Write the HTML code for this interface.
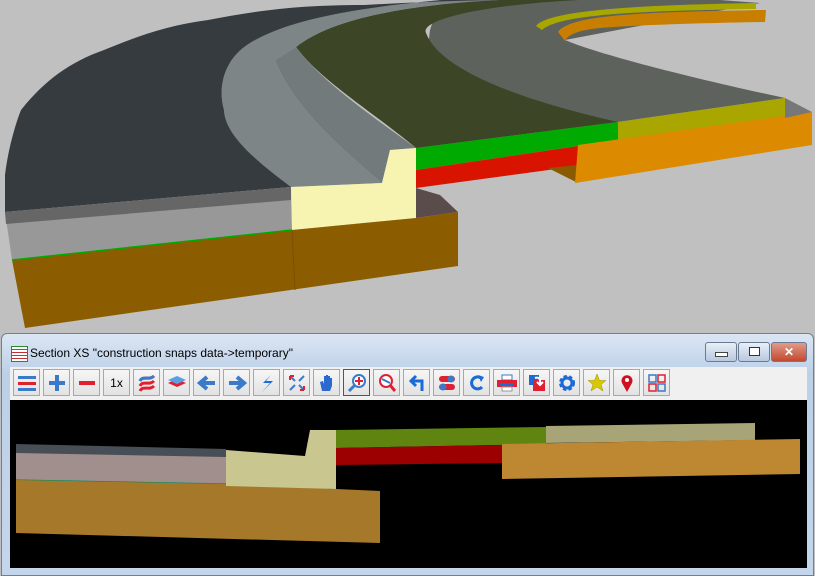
<!DOCTYPE html>
<html><head><meta charset="utf-8"><style>
body{margin:0;width:815px;height:576px;overflow:hidden;background:#c0c0c0;font-family:"Liberation Sans",sans-serif;position:relative}
.win{position:absolute;left:1px;top:333px;width:811px;height:241px;background:linear-gradient(#dbe6f3,#bcd0e8 40px,#c4d6ec);border:1px solid #6f7f94;border-radius:6px 6px 0 0}
.title{position:absolute;left:28px;top:12px;font-size:12px;color:#000}
.tb{position:absolute;left:8px;top:33px;width:797px;height:33px;background:#f0f0f0}
.btn{position:absolute;top:2px;width:27px;height:27px;background:linear-gradient(#f6f6f6,#e2e2e2);border:1px solid #a8a8a8;box-sizing:border-box;display:flex;align-items:center;justify-content:center;font-size:12px}
.cb{position:absolute;top:8px;height:18px;border:1px solid #6a7a90;border-radius:3px;background:linear-gradient(#e8eef7,#b8c9e0)}
</style></head><body>
<svg width="815" height="335" style="position:absolute;left:0;top:0">
<rect width="815" height="335" fill="#c0c0c0"/>
<path d="M440,0 L720,0 L760,3 L565,40 C600,55 700,80 785,98 L618,122 L416,148 L430,30Z" fill="#5e625c"/>
<path d="M296,47 C330,20 400,5 500,0 L580,0 C480,5 420,20 426,33 C440,70 520,100 618,122 L416,148 C370,110 320,80 296,47Z" fill="#3d4527"/>
<path d="M275,60 L296,47 C320,80 370,115 416,148 L390,150 L382,183 C330,140 290,100 275,60Z" fill="#737a7b"/>
<path d="M291,187 C255,160 225,135 224,110 C218,90 222,60 250,43 C280,25 330,10 442,0 L500,0 C400,5 330,20 296,47 L275,60 C290,100 330,140 382,183Z" fill="#7e8587"/>
<path d="M5,212 L5,175 C8,150 15,125 21,110 C45,80 70,62 104,50 C140,35 170,25 208,20 C260,10 300,5 364,5 C420,2 470,0 520,0 L442,0 C330,10 280,25 250,43 C222,60 218,90 224,110 C225,135 255,160 291,187Z" fill="#363b3f"/>
<path d="M536,26 C548,10 640,5 756,3 L756,9 C640,11 560,14 542,30Z" fill="#a8a600"/>
<path d="M558,32 C570,14 650,12 766,10 L765,22 C700,23 640,25 600,28 C580,30 568,34 565,41Z" fill="#c87e00"/>
<path d="M5,212 L291,187 L292,230 L12,260 Z" fill="#989898"/>
<path d="M5,212 L291,187 L291,200 L6,224 Z" fill="#666"/>
<path d="M291,187 L382,183 L390,150 L416,148 L416,218 L292,230 Z" fill="#f6f4b0"/>
<path d="M416,148 L618,122 L618,140 L416,170Z" fill="#00aa00"/>
<path d="M416,170 L578,146 L578,166 L416,188Z" fill="#d81400"/>
<path d="M618,122 L785,98 L785,118 L618,140Z" fill="#aaa600"/>
<path d="M548,168 L578,165 L578,183 Z" fill="#8a5a00"/>
<path d="M578,145 L812,112 L812,145 L575,183Z" fill="#dc8a00"/>
<path d="M785,98 L812,112 L785,118Z" fill="#777"/>
<path d="M416,188 L440,195 L458,212 L416,218Z" fill="#5a4c4a"/>
<path d="M12,260 L292,230 L416,218 L458,212 L458,266 L25,328 Z" fill="#8c5d00"/>
<path d="M292,230 L295,290" stroke="#7a5000" stroke-width="1"/>
<path d="M12,260 L292,230" stroke="#00aa00" stroke-width="1.5"/>
</svg>
<div class="win">
<div style="position:absolute;left:9px;top:12px;width:15px;height:14px;border:1px solid #2a8a2a;background:repeating-linear-gradient(#fff 0 2px,#4060c0 2px 3px,#fff 3px 5px,#c03030 5px 6px)"></div>
<div class="title">Section XS "construction snaps data-&gt;temporary"</div>
<div class="cb" style="left:703px;width:30px"><div style="margin:9px auto 0;width:11px;height:3px;background:#fff;border:1px solid #444"></div></div>
<div class="cb" style="left:736px;width:30px"><div style="margin:4px auto 0;width:9px;height:7px;border:1px solid #333;background:#fff"></div></div>
<div class="cb" style="left:769px;width:34px;background:linear-gradient(#e29a8a,#c24a30);color:#fff;text-align:center;font-weight:bold;font-size:12px;line-height:18px">✕</div>
<div class="tb">
<div class="btn" style="left:3px"><svg width="20" height="18"><rect x="1" y="2" width="18" height="3" fill="#3a7ac8"/><rect x="1" y="8" width="18" height="3" fill="#e02030"/><rect x="1" y="14" width="18" height="3" fill="#3a7ac8"/></svg></div>
<div class="btn" style="left:33px"><svg width="20" height="20"><path d="M10 2V18M2 10H18" stroke="#3a7ac8" stroke-width="4"/></svg></div>
<div class="btn" style="left:63px"><svg width="20" height="20"><path d="M2 10H18" stroke="#e02030" stroke-width="4"/></svg></div>
<div class="btn" style="left:93px">1x</div>
<div class="btn" style="left:123px"><svg width="20" height="20"><path d="M3 8C6 2 12 8 17 3M3 13C6 7 12 13 17 8M3 18C6 12 12 18 17 13" stroke="#e02030" stroke-width="3" fill="none"/><path d="M3 8C6 2 12 8 17 3" stroke="#3a7ac8" stroke-width="3" fill="none"/></svg></div>
<div class="btn" style="left:153px"><svg width="22" height="20"><path d="M2 10L11 14L20 10L11 6Z" fill="#e02030"/><path d="M2 7L11 11L20 7L11 3Z" fill="#5aa0e0"/></svg></div>
<div class="btn" style="left:183px"><svg width="20" height="20"><path d="M18 10H6M10 4L3 10L10 16" stroke="#3a7ac8" stroke-width="4" fill="none"/></svg></div>
<div class="btn" style="left:213px"><svg width="20" height="20"><path d="M2 10H14M10 4L17 10L10 16" stroke="#3a7ac8" stroke-width="4" fill="none"/></svg></div>
<div class="btn" style="left:243px"><svg width="20" height="20"><path d="M14 2L6 10L13 10L5 19L16 8L9 8Z" fill="#1a6ad8"/></svg></div>
<div class="btn" style="left:273px"><svg width="20" height="20"><path d="M3 3L8 8M17 17L12 12M17 3L12 8M3 17L8 12" stroke="#3a7ac8" stroke-width="2"/><path d="M3 3h4M3 3v4M17 17h-4M17 17v-4" stroke="#e02030" stroke-width="2"/></svg></div>
<div class="btn" style="left:303px"><svg width="20" height="20"><path d="M5 18L3 9L6 8L7 11V3L9 3V9V2H11V9V3H13V10V5H15V13L13 18Z" fill="#2a6ad0"/></svg></div>
<div class="btn" style="left:333px;border-color:#555"><svg width="20" height="20"><circle cx="12" cy="8" r="6" fill="#fff" stroke="#3a7ac8" stroke-width="2"/><path d="M8 12L2 18" stroke="#3a7ac8" stroke-width="3"/><path d="M12 4V12M8 8H16" stroke="#e02030" stroke-width="2"/></svg></div>
<div class="btn" style="left:363px"><svg width="20" height="20"><circle cx="9" cy="8" r="6" fill="#fff" stroke="#e02030" stroke-width="2"/><path d="M13 12L18 18" stroke="#e02030" stroke-width="3"/><path d="M5 6L13 10" stroke="#3a7ac8" stroke-width="2"/></svg></div>
<div class="btn" style="left:393px"><svg width="20" height="20"><path d="M15 18V8H5M9 3L4 8L9 13" stroke="#1a6ad8" stroke-width="3" fill="none"/></svg></div>
<div class="btn" style="left:423px"><svg width="20" height="20"><rect x="2" y="3" width="16" height="6" rx="3" fill="#e02030"/><rect x="2" y="11" width="16" height="6" rx="3" fill="#e02030"/><circle cx="14" cy="6" r="3.5" fill="#3a7ac8"/><circle cx="6" cy="14" r="3.5" fill="#3a7ac8"/></svg></div>
<div class="btn" style="left:453px"><svg width="20" height="20"><path d="M15 14A6 6 0 1 1 14 5" stroke="#1a6ad8" stroke-width="3" fill="none"/><path d="M11 2L17 4L14 9Z" fill="#1a6ad8"/></svg></div>
<div class="btn" style="left:483px"><svg width="22" height="20"><rect x="6" y="2" width="10" height="5" fill="#fff" stroke="#3a7ac8"/><rect x="1" y="7" width="20" height="7" fill="#e02030"/><rect x="4" y="10" width="14" height="3" fill="#1a6ad8"/><rect x="6" y="14" width="10" height="4" fill="#fff" stroke="#999"/></svg></div>
<div class="btn" style="left:513px"><svg width="20" height="20"><rect x="2" y="2" width="10" height="10" fill="#1a6ad8"/><rect x="6" y="7" width="12" height="11" fill="#e02030"/><path d="M8 5Q14 3 13 11M10 9L13 12L16 9" stroke="#fff" stroke-width="2" fill="none"/></svg></div>
<div class="btn" style="left:543px"><svg width="20" height="20"><circle cx="10" cy="10" r="6" fill="none" stroke="#1a6ad8" stroke-width="4" stroke-dasharray="3 2"/><circle cx="10" cy="10" r="5" fill="none" stroke="#1a6ad8" stroke-width="3"/></svg></div>
<div class="btn" style="left:573px"><svg width="20" height="20"><path d="M10 1L12.5 7.5H19L14 11.5L16 18L10 14L4 18L6 11.5L1 7.5H7.5Z" fill="#d8c800" stroke="#a09000" stroke-width=".5"/></svg></div>
<div class="btn" style="left:603px"><svg width="20" height="20"><path d="M10 19L5 10A5.5 5.5 0 1 1 15 10Z" fill="#d01020"/><circle cx="10" cy="7" r="2" fill="#fff"/></svg></div>
<div class="btn" style="left:633px"><svg width="20" height="20"><rect x="2" y="2" width="7" height="7" fill="none" stroke="#3a7ac8" stroke-width="1.5"/><rect x="11" y="2" width="7" height="7" fill="none" stroke="#e02030" stroke-width="1.5"/><rect x="2" y="11" width="7" height="7" fill="none" stroke="#e02030" stroke-width="1.5"/><rect x="11" y="11" width="7" height="7" fill="none" stroke="#3a7ac8" stroke-width="1.5"/></svg></div>
</div>
</div>
<svg width="797" height="168" style="position:absolute;left:10px;top:400px">
<rect width="797" height="168" fill="#000"/>
<g transform="translate(-10,-400)">
<path d="M16,444 L226,449 L226,458 L16,455Z" fill="#474e55"/>
<path d="M16,453 L226,457 L226,485 L16,480Z" fill="#a08f8c"/>
<path d="M16,480 L226,484" stroke="#0a8a5a" stroke-width="1.2"/>
<path d="M16,480 L226,484 L380,491 L380,543 L16,533Z" fill="#a6792a"/>
<path d="M226,450 L305,456 L310,430 L336,430 L336,489 L226,486Z" fill="#c9c690"/>
<path d="M336,430 L546,427 L546,444 L336,448Z" fill="#5f8410"/>
<path d="M336,448 L502,445 L502,463 L336,465Z" fill="#9c0000"/>
<path d="M546,426 L755,423 L755,440 L546,443Z" fill="#a7a478"/>
<path d="M502,444 L800,439 L800,474 L502,479Z" fill="#bd8831"/>
</g>
</svg>
</body></html>
